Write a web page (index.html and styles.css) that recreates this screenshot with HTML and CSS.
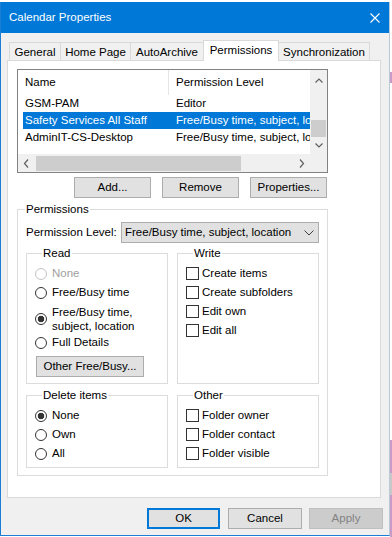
FILE: index.html
```html
<!DOCTYPE html>
<html>
<head>
<meta charset="utf-8">
<title>Calendar Properties</title>
<link rel="stylesheet" href="styles.css">
</head>
<body>
<div class="window">
  <div class="titlebar">
    <span class="title">Calendar Properties</span>
    <svg class="close" width="10" height="10" viewBox="0 0 10 10"><path d="M0.5 0.5 L9.5 9.5 M9.5 0.5 L0.5 9.5" stroke="#fff" stroke-width="1.1" fill="none"/></svg>
  </div>
  <div class="tabs">
    <div class="tab t1">General</div>
    <div class="tab t2">Home Page</div>
    <div class="tab t3">AutoArchive</div>
    <div class="tab t4 active">Permissions</div>
    <div class="tab t5">Synchronization</div>
  </div>
  <div class="panel">
    <div class="list">
      <div class="list-main">
        <div class="list-header"><div class="h1">Name</div><div class="h2">Permission Level</div></div>
        <div class="row"><span class="c1">GSM-PAM</span><span class="c2">Editor</span></div>
        <div class="row sel"><span class="c1">Safety Services All Staff</span><span class="c2">Free/Busy time, subject, lo</span></div>
        <div class="row"><span class="c1">AdminIT-CS-Desktop</span><span class="c2">Free/Busy time, subject, lo</span></div>
      </div>
      <div class="vscroll">
        <div class="sb-up"><svg width="17" height="21" viewBox="0 0 17 21"><path d="M5.5 12.5 L9 9 L12.5 12.5" stroke="#606060" stroke-width="1.2" fill="none"/></svg></div>
        <div class="sb-track"></div>
        <div class="vthumb"></div>
        <div class="sb-down"><svg width="17" height="17" viewBox="0 0 17 17"><path d="M5.5 6.5 L9 10 L12.5 6.5" stroke="#606060" stroke-width="1.2" fill="none"/></svg></div>
      </div>
      <div class="hscroll">
        <div class="sb-left"><svg width="17" height="17" viewBox="0 0 17 17"><path d="M10 4.5 L6.5 8.5 L10 12.5" stroke="#606060" stroke-width="1.2" fill="none"/></svg></div>
        <div class="hthumb"></div>
        <div class="sb-track"></div>
        <div class="sb-right"><svg width="17" height="17" viewBox="0 0 17 17"><path d="M7 4.5 L10.5 8.5 L7 12.5" stroke="#606060" stroke-width="1.2" fill="none"/></svg></div>
      </div>
      <div class="corner"></div>
    </div>
    <div class="btn-row">
      <div class="btn">Add...</div>
      <div class="btn">Remove</div>
      <div class="btn">Properties...</div>
    </div>
    <fieldset class="group outer">
      <legend>Permissions</legend>
      <div class="level-row">
        <span class="level-label">Permission Level:</span>
        <div class="select"><span>Free/Busy time, subject, location</span><svg width="10" height="6" viewBox="0 0 10 6"><path d="M0.5 0.5 L5 5 L9.5 0.5" stroke="#404040" stroke-width="1" fill="none"/></svg></div>
      </div>
      <div class="grid">
        <fieldset class="group sub">
          <legend>Read</legend>
          <div class="opt dis"><span class="radio"></span><span class="lbl">None</span></div>
          <div class="opt"><span class="radio"></span><span class="lbl">Free/Busy time</span></div>
          <div class="opt two"><span class="radio on"></span><span class="lbl">Free/Busy time,<br>subject, location</span></div>
          <div class="opt"><span class="radio"></span><span class="lbl">Full Details</span></div>
          <div class="btn other-btn">Other Free/Busy...</div>
        </fieldset>
        <fieldset class="group sub">
          <legend>Write</legend>
          <div class="opt"><span class="check"></span><span class="clbl">Create items</span></div>
          <div class="opt"><span class="check"></span><span class="clbl">Create subfolders</span></div>
          <div class="opt"><span class="check"></span><span class="clbl">Edit own</span></div>
          <div class="opt"><span class="check"></span><span class="clbl">Edit all</span></div>
        </fieldset>
        <fieldset class="group del">
          <legend>Delete items</legend>
          <div class="opt"><span class="radio on"></span><span class="lbl">None</span></div>
          <div class="opt"><span class="radio"></span><span class="lbl">Own</span></div>
          <div class="opt"><span class="radio"></span><span class="lbl">All</span></div>
        </fieldset>
        <fieldset class="group del">
          <legend>Other</legend>
          <div class="opt"><span class="check"></span><span class="clbl">Folder owner</span></div>
          <div class="opt"><span class="check"></span><span class="clbl">Folder contact</span></div>
          <div class="opt"><span class="check"></span><span class="clbl">Folder visible</span></div>
        </fieldset>
      </div>
    </fieldset>
  </div>
  <div class="footer">
    <div class="btn fbtn ok">OK</div>
    <div class="btn fbtn cancel">Cancel</div>
    <div class="btn fbtn apply">Apply</div>
  </div>
</div>
<div class="edge">
  <div class="seg s1"></div>
  <div class="seg s2"></div>
  <div class="seg s3"></div>
  <div class="seg s4"></div>
  <div class="seg s5"></div>
  <div class="seg s6"></div>
</div>
</body>
</html>
```

FILE: styles.css
```css
* { box-sizing: border-box; }
html, body { margin: 0; padding: 0; }
body {
  width: 392px;
  height: 537px;
  overflow: hidden;
  background: #fff;
  font-family: "Liberation Sans", Arial, sans-serif;
  font-size: 11.5px;
  line-height: 15px;
  color: #000;
  display: flex;
  align-items: flex-start;
}
.window {
  width: 390px;
  height: 534px;
  flex-shrink: 0;
  margin-top: 2px;
  background: #f0f0f0;
  border: 1px solid #1a7fd4;
  border-top: none;
  border-right-color: #b9c9d9;
  display: flex;
  flex-direction: column;
}
.edge { width: 2px; height: 537px; display: flex; flex-direction: column; }
.seg { flex-shrink: 0; }
.s1 { height: 72px; background: #fff; }
.s2 { height: 11px; background: #c89ac8; }
.s3 { height: 357px; background: #fff; }
.s4 { height: 33px; background: #c99bc9; }
.s5 { height: 22px; background: #c8c8c8; }
.s6 { height: 42px; background: #c99bc9; }
.titlebar {
  height: 31px;
  flex-shrink: 0;
  background: #0078d7;
  color: #fff;
  display: flex;
  align-items: center;
  justify-content: space-between;
  padding: 0 9px 0 8px;
}
.close { display: block; }
.tabs {
  display: flex;
  align-items: flex-end;
  height: 21px;
  margin: 7px 0 -1px 8px;
  flex-shrink: 0;
}
.tab {
  height: 18px;
  margin-bottom: 1px;
  margin-left: -1px;
  border: 1px solid #d9d9d9;
  border-bottom: none;
  background: #f0f0f0;
  text-align: center;
  padding-top: 1px;
  line-height: 16px;
  white-space: nowrap;
}
.tab.t1 { margin-left: 0; width: 52px; }
.tab.t2 { width: 71px; }
.tab.t3 { width: 74px; }
.tab.t4 { width: 76px; }
.tab.t5 { width: 92px; }
.tab.active {
  height: 21px;
  margin-bottom: 0;
  background: #fff;
  padding-top: 0;
  line-height: 19px;
  position: relative;
  z-index: 1;
}
.panel {
  margin-left: 6px;
  width: 374px;
  height: 438px;
  flex-shrink: 0;
  background: #fff;
  border: 1px solid #d9d9d9;
  padding: 8px 0 0 9px;
}
.list {
  width: 311px;
  height: 104px;
  border: 1px solid #828282;
  display: grid;
  grid-template-columns: 1fr 17px;
  grid-template-rows: 84px 1fr;
}
.list-main { overflow: hidden; background: #fff; }
.list-header { height: 25px; display: flex; }
.h1 {
  width: 151px;
  padding-left: 7px;
  line-height: 25px;
  border-right: 1px solid #e5e5e5;
}
.h2 { padding-left: 7px; line-height: 25px; white-space: nowrap; }
.row {
  height: 17px;
  margin-left: 5px;
  display: flex;
  line-height: 17px;
  white-space: nowrap;
  overflow: hidden;
}
.row .c1 { width: 153px; flex-shrink: 0; padding-left: 2px; }
.row.sel { background: #0078d7; color: #fff; }
.vscroll {
  background: #f0f0f0;
  display: flex;
  flex-direction: column;
}
.vscroll svg, .hscroll svg { display: block; }
.sb-up { height: 21px; }
.sb-track { flex: 1; }
.vthumb { height: 17px; margin: 0 1px; background: #cdcdcd; }
.sb-down { height: 17px; }
.hscroll {
  background: #f0f0f0;
  display: flex;
  align-items: center;
}
.sb-left, .sb-right { width: 17px; height: 17px; flex-shrink: 0; }
.hthumb { width: 205px; height: 15px; margin-left: 1px; background: #cdcdcd; flex-shrink: 0; }
.corner { background: #f0f0f0; }
.btn-row {
  display: flex;
  gap: 11px;
  margin: 4px 0 0 57px;
}
.btn {
  height: 21px;
  background: #e1e1e1;
  border: 1px solid #adadad;
  display: flex;
  align-items: center;
  justify-content: center;
  white-space: nowrap;
}
.btn-row .btn { width: 77px; }
.group {
  margin: 0;
  padding: 0;
  border: 1px solid #dcdcdc;
  min-width: 0;
}
.group > legend {
  padding: 0 1px;
  margin-left: 7px;
  line-height: 15px;
}
.outer {
  width: 311px;
  margin-top: 4px;
  padding: 0 0 7px 0;
}
.level-row {
  display: flex;
  align-items: center;
  height: 21px;
  margin: 5px 0 0 8px;
}
.level-label { width: 95px; flex-shrink: 0; }
.select {
  width: 198px;
  height: 21px;
  border: 1px solid #adadad;
  background: #e1e1e1;
  display: flex;
  align-items: center;
  padding: 0 4px 0 3px;
  white-space: nowrap;
}
.select svg { margin-left: auto; display: block; }
.grid {
  display: grid;
  grid-template-columns: 142px 142px;
  column-gap: 9px;
  row-gap: 4px;
  margin: 3px 0 0 8px;
}
.sub { padding: 3px 0 6px 8px; }
.del { padding: 3px 0 4px 8px; }
.opt {
  display: flex;
  align-items: center;
  height: 19px;
  white-space: nowrap;
}
.opt.two { height: 31px; padding-top: 3px; line-height: 14px; }
.opt .lbl { margin-left: 5px; }
.opt .clbl { margin-left: 3px; }
.opt.dis { color: #a0a0a0; }
.radio {
  width: 12px;
  height: 12px;
  border: 1px solid #333;
  border-radius: 50%;
  background: #fff;
  flex-shrink: 0;
}
.radio.on { background: radial-gradient(circle, #333 0 3px, #fff 3.6px); }
.opt.dis .radio { border-color: #c4c4c4; }
.check {
  width: 13px;
  height: 13px;
  border: 1px solid #333;
  background: #fff;
  flex-shrink: 0;
}
.other-btn { width: 108px; margin: 4px 0 0 1px; }
.footer {
  display: flex;
  justify-content: flex-end;
  margin-top: 10px;
  padding-right: 6px;
}
.fbtn { width: 74px; }
.fbtn.ok { width: 73px; border: 2px solid #0078d7; }
.fbtn.cancel { margin-left: 8px; }
.fbtn.apply { margin-left: 7px; background: #cccccc; border-color: #bfbfbf; color: #838383; }
```
